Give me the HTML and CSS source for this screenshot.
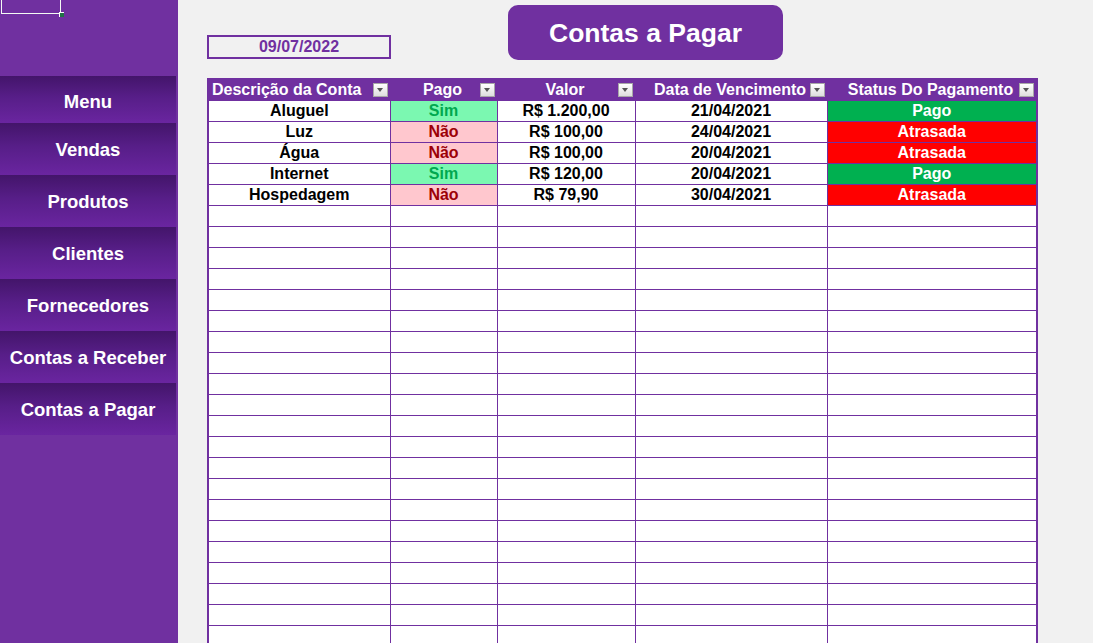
FILE: index.html
```html
<!DOCTYPE html>
<html lang="pt-BR">
<head>
    <meta charset="UTF-8">
    <title>Contas a Pagar</title>
    <link rel="stylesheet" href="styles.css">
</head>
<body>
    <aside class="sidebar">
        <div class="cell-select"><span class="cell-handle"></span></div>
        <nav class="menu">
            <a class="menu-btn menu-first">Menu</a>
            <a class="menu-btn">Vendas</a>
            <a class="menu-btn">Produtos</a>
            <a class="menu-btn">Clientes</a>
            <a class="menu-btn">Fornecedores</a>
            <a class="menu-btn">Contas a Receber</a>
            <a class="menu-btn">Contas a Pagar</a>
        </nav>
    </aside>

    <main class="main">
        <div class="top-row">
            <div class="date-box">09/07/2022</div>
            <div class="title-btn">Contas a Pagar</div>
        </div>

        <table class="grid">
            <colgroup>
                <col class="c-desc">
                <col class="c-pago">
                <col class="c-valor">
                <col class="c-data">
                <col class="c-status">
            </colgroup>
            <thead>
                <tr>
                    <th class="th-first"><div class="th-in"><span class="th-txt">Descrição da Conta</span><span class="filter"></span></div></th>
                    <th><div class="th-in"><span class="th-txt">Pago</span><span class="filter"></span></div></th>
                    <th><div class="th-in"><span class="th-txt">Valor</span><span class="filter"></span></div></th>
                    <th><div class="th-in"><span class="th-txt">Data de Vencimento</span><span class="filter"></span></div></th>
                    <th><div class="th-in"><span class="th-txt">Status Do Pagamento</span><span class="filter"></span></div></th>
                </tr>
            </thead>
            <tbody id="rows">
                <tr><td>Aluguel</td><td class="sim">Sim</td><td>R$ 1.200,00</td><td>21/04/2021</td><td class="pago">Pago</td></tr>
                <tr><td>Luz</td><td class="nao">Não</td><td>R$ 100,00</td><td>24/04/2021</td><td class="atrasada">Atrasada</td></tr>
                <tr><td>Água</td><td class="nao">Não</td><td>R$ 100,00</td><td>20/04/2021</td><td class="atrasada">Atrasada</td></tr>
                <tr><td>Internet</td><td class="sim">Sim</td><td>R$ 120,00</td><td>20/04/2021</td><td class="pago">Pago</td></tr>
                <tr><td>Hospedagem</td><td class="nao">Não</td><td>R$ 79,90</td><td>30/04/2021</td><td class="atrasada">Atrasada</td></tr>
                <tr><td></td><td></td><td></td><td></td><td></td></tr>
                <tr><td></td><td></td><td></td><td></td><td></td></tr>
                <tr><td></td><td></td><td></td><td></td><td></td></tr>
                <tr><td></td><td></td><td></td><td></td><td></td></tr>
                <tr><td></td><td></td><td></td><td></td><td></td></tr>
                <tr><td></td><td></td><td></td><td></td><td></td></tr>
                <tr><td></td><td></td><td></td><td></td><td></td></tr>
                <tr><td></td><td></td><td></td><td></td><td></td></tr>
                <tr><td></td><td></td><td></td><td></td><td></td></tr>
                <tr><td></td><td></td><td></td><td></td><td></td></tr>
                <tr><td></td><td></td><td></td><td></td><td></td></tr>
                <tr><td></td><td></td><td></td><td></td><td></td></tr>
                <tr><td></td><td></td><td></td><td></td><td></td></tr>
                <tr><td></td><td></td><td></td><td></td><td></td></tr>
                <tr><td></td><td></td><td></td><td></td><td></td></tr>
                <tr><td></td><td></td><td></td><td></td><td></td></tr>
                <tr><td></td><td></td><td></td><td></td><td></td></tr>
                <tr><td></td><td></td><td></td><td></td><td></td></tr>
                <tr><td></td><td></td><td></td><td></td><td></td></tr>
                <tr><td></td><td></td><td></td><td></td><td></td></tr>
                <tr><td></td><td></td><td></td><td></td><td></td></tr>
                <tr><td></td><td></td><td></td><td></td><td></td></tr>
                <tr><td></td><td></td><td></td><td></td><td></td></tr>
            </tbody>
        </table>
    </main>
</body>
</html>
```

FILE: styles.css
```css
html, body {
    height: 100%;
}

body {
    margin: 0;
    display: flex;
    overflow: hidden;
    background-color: #f1f1f1;
    font-family: "Liberation Sans", Arial, sans-serif;
}

/* left menu */
.sidebar {
    position: relative;
    width: 178px;
    flex-shrink: 0;
    background-color: #7030a0;
    padding-top: 76px;
}

/* excel cell selection left over in the corner */
.cell-select {
    position: absolute;
    left: 1px;
    top: -2px;
    width: 58px;
    height: 14px;
    border: 1px solid #f4fbf4;
}

.cell-handle {
    position: absolute;
    right: -4px;
    bottom: -4px;
    width: 4px;
    height: 4px;
    background-color: #217346;
    border-top: 1px solid #ffffff;
    border-left: 1px solid #ffffff;
}

.menu {
    display: flex;
    flex-direction: column;
    width: 176px;
}

.menu-btn {
    display: flex;
    align-items: center;
    justify-content: center;
    box-sizing: border-box;
    height: 52px;
    padding-top: 2px;
    color: #ffffff;
    font-size: 18.5px;
    font-weight: bold;
    background: linear-gradient(#43156a, #571e88 45%, #6a25a0);
    cursor: pointer;
}

.menu-first {
    height: 47px;
    padding-top: 5px;
}

/* main area */
.main {
    padding: 5px 0 0 29px;
}

.top-row {
    display: flex;
    align-items: flex-start;
    height: 55px;
}

.date-box {
    box-sizing: border-box;
    width: 184px;
    height: 24px;
    margin-top: 30px;
    border: 2px solid #7030a0;
    color: #7030a0;
    font-size: 16px;
    font-weight: bold;
    text-align: center;
    line-height: 20px;
}

.title-btn {
    box-sizing: border-box;
    width: 275px;
    height: 55px;
    margin-left: 117px;
    padding-top: 2px;
    border-radius: 10px;
    background-color: #7030a0;
    color: #ffffff;
    font-size: 26.5px;
    font-weight: bold;
    display: flex;
    align-items: center;
    justify-content: center;
}

.grid {
    margin-top: 18px;
    width: 829px;
    table-layout: fixed;
    border-collapse: collapse;
    border: 2px solid #7030a0;
    background-color: #ffffff;
}

.c-desc { width: 182px; }
.c-pago { width: 107px; }
.c-valor { width: 138px; }
.c-data { width: 192px; }
.c-status { width: 210px; }

.grid th {
    height: 20px;
    padding: 0 2px 0 0;
    background-color: #7030a0;
    color: #ffffff;
    font-size: 16px;
    font-weight: bold;
}

.th-in {
    display: flex;
    align-items: center;
    padding-left: 15px;
}

.th-txt {
    flex: 1;
    text-align: center;
    white-space: nowrap;
}

.th-first .th-in {
    padding-left: 3px;
}

.th-first .th-txt {
    text-align: left;
}

.filter {
    position: relative;
    box-sizing: border-box;
    width: 15px;
    height: 14px;
    border: 1px solid #a8a8a8;
    background: linear-gradient(#ffffff, #dedede);
}

.filter::after {
    content: "";
    position: absolute;
    left: 3px;
    top: 4px;
    border-left: 3.5px solid transparent;
    border-right: 3.5px solid transparent;
    border-top: 4px solid #555555;
}

.grid td {
    height: 20px;
    padding: 0;
    border: 1px solid #7030a0;
    text-align: center;
    color: #000000;
    font-size: 16px;
    font-weight: bold;
    line-height: 20px;
    white-space: nowrap;
}

.grid td.sim {
    background-color: #7bf8b1;
    color: #00a84f;
}

.grid td.nao {
    background-color: #ffc7ce;
    color: #9c0006;
}

.grid td.pago {
    background-color: #00b050;
    color: #ffffff;
}

.grid td.atrasada {
    background-color: #ff0000;
    color: #ffffff;
}
```
